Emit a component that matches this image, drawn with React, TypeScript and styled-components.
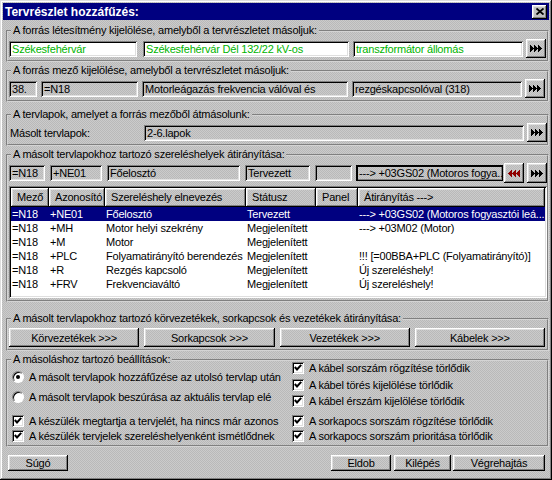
import React from 'react';
import styled, { createGlobalStyle } from 'styled-components';

const GlobalStyle = createGlobalStyle`
    body {
        margin: 0;
        font-family: "Liberation Sans", Arial, sans-serif;
        font-size: 11px;
        letter-spacing: -0.2px;
        color: #000;
    }
`;

const dither = `repeating-conic-gradient(#cbcbcb 0% 25%, #b9b9b9 0% 50%) 0 0 / 2px 2px`;
const raised = `inset -1px -1px #000, inset 1px 1px #fff, inset -2px -2px #808080, inset 2px 2px #dfdfdf`;
const sunken = `inset 1px 1px #808080, inset -1px -1px #fff, inset 2px 2px #000, inset -2px -2px #dfdfdf`;

const Window = styled.div`
    width: 552px;
    height: 480px;
    box-sizing: border-box;
    padding: 3px;
    background: ${dither};
    box-shadow: inset -1px -1px #000, inset 1px 1px #dfdfdf, inset -2px -2px #808080, inset 2px 2px #fff;
    display: flex;
    flex-direction: column;
`;

const TitleBar = styled.div`
    height: 17px;
    background: #000080;
    color: #fff;
    font-size: 12px;
    font-weight: bold;
    letter-spacing: 0;
    display: flex;
    align-items: center;
    justify-content: space-between;
    padding: 0 2px 0 2px;
`;

const CloseButton = styled.div`
    width: 15px;
    height: 14px;
    background: #c0c0c0;
    box-shadow: ${raised};
    display: flex;
    align-items: center;
    justify-content: center;
`;

const Group = styled.fieldset<{ $mt: number }>`
    margin: ${(p) => p.$mt}px 0 0 3px;
    width: 543px;
    box-sizing: border-box;
    padding: 0 1px 2px 1px;
    border: 2px groove #d4d4d4;
    min-width: 0;
`;

const Legend = styled.legend`
    line-height: 13px;
    padding: 0 2px;
    margin-left: 2px;
`;

const Row = styled.div<{ $h?: number; $mt?: number }>`
    display: flex;
    align-items: center;
    height: ${(p) => p.$h ?? 19}px;
    margin-top: ${(p) => p.$mt ?? 2}px;
`;

const Field = styled.div<{ $w: number; $ml?: number; $white?: boolean; $green?: boolean; $focus?: boolean }>`
    width: ${(p) => p.$w}px;
    margin-left: ${(p) => p.$ml ?? 0}px;
    height: 16px;
    flex: none;
    box-sizing: border-box;
    padding: 0 3px;
    line-height: 16px;
    white-space: nowrap;
    overflow: hidden;
    background: ${(p) => (p.$white ? '#fff' : 'transparent')};
    color: ${(p) => (p.$green ? '#00b400' : '#000')};
    box-shadow: ${(p) => (p.$focus ? `inset 0 0 0 1px #000, inset 2px 2px #000, inset -2px -2px #808080` : sunken)};
`;

const FieldLabel = styled.div<{ $w: number }>`
    width: ${(p) => p.$w}px;
    flex: none;
    padding-left: 1px;
`;

const ArrowButton = styled.div<{ $ml?: number; $h?: number }>`
    width: 20px;
    height: ${(p) => p.$h ?? 19}px;
    margin-left: ${(p) => p.$ml ?? 0}px;
    flex: none;
    box-shadow: ${raised};
    display: flex;
    align-items: center;
    justify-content: center;
`;

const ListBox = styled.div`
    margin: 3px 0 0 0;
    width: 538px;
    height: 112px;
    box-sizing: border-box;
    padding: 2px;
    background: #fff;
    box-shadow: ${sunken};
    overflow: hidden;
`;

const ListHeader = styled.div`
    display: flex;
    height: 19px;
    background: ${dither};
`;

const HeaderCell = styled.div<{ $w: number }>`
    width: ${(p) => p.$w}px;
    flex: none;
    box-sizing: border-box;
    padding-left: 6px;
    line-height: 19px;
    white-space: nowrap;
    overflow: hidden;
    box-shadow: ${raised};
`;

const ListRow = styled.div<{ $selected?: boolean }>`
    display: flex;
    height: 14px;
    line-height: 14px;
    background: ${(p) => (p.$selected ? '#000080' : 'transparent')};
    color: ${(p) => (p.$selected ? '#fff' : '#000')};
`;

const Cell = styled.div<{ $w: number }>`
    width: ${(p) => p.$w}px;
    flex: none;
    box-sizing: border-box;
    padding-left: 1px;
    white-space: nowrap;
    overflow: hidden;
`;

const ButtonGrid = styled.div`
    display: grid;
    grid-template-columns: repeat(4, 1fr);
    gap: 5px;
    margin: 3px 1px 0 0;
    height: 19px;
`;

const PushButton = styled.div<{ $w?: number; $ml?: number }>`
    ${(p) => (p.$w ? `width: ${p.$w}px; flex: none;` : '')}
    margin-left: ${(p) => p.$ml ?? 0}px;
    box-shadow: ${raised};
    display: flex;
    align-items: center;
    justify-content: center;
    white-space: nowrap;
`;

const Settings = styled.div`
    display: grid;
    grid-template-columns: 280px 1fr;
    padding: 3px 0 0 3px;
`;

const OptionColumn = styled.div<{ $mt?: number }>`
    display: flex;
    flex-direction: column;
    margin-top: ${(p) => p.$mt ?? 0}px;
    min-width: 0;
`;

const Option = styled.div<{ $mt?: number }>`
    display: flex;
    align-items: center;
    gap: 5px;
    height: 15px;
    margin-top: ${(p) => p.$mt ?? 0}px;
    white-space: nowrap;
    overflow: hidden;
`;

const CheckBox = styled.div`
    width: 12px;
    height: 12px;
    flex: none;
    box-sizing: border-box;
    background: #fff;
    box-shadow: ${sunken};
    display: flex;
    align-items: center;
    justify-content: center;
`;

const Radio = styled.div<{ $on?: boolean }>`
    width: 12px;
    height: 12px;
    flex: none;
    box-sizing: border-box;
    border-radius: 50%;
    background: #fff;
    border: 1px solid;
    border-color: #808080 #fff #fff #808080;
    box-shadow: inset 1px 1px #000;
    display: flex;
    align-items: center;
    justify-content: center;
    &::after {
        content: '';
        display: ${(p) => (p.$on ? 'block' : 'none')};
        width: 4px;
        height: 4px;
        border-radius: 50%;
        background: #000;
    }
`;

const Footer = styled.div`
    display: flex;
    height: 16px;
    margin: 8px 0 0 5px;
`;

const Spacer = styled.div`
    flex: 1;
`;

function Arrows({ left }: { left?: boolean }) {
    const pts = [0, 4, 8].map((x) =>
        left ? `${x + 4},0 ${x},3.5 ${x + 4},7` : `${x},0 ${x + 4},3.5 ${x},7`
    );
    return (
        <svg width="12" height="7" viewBox="0 0 12 7" shapeRendering="crispEdges">
            {pts.map((p) => (
                <polygon key={p} points={p} fill={left ? '#900000' : '#000'} />
            ))}
        </svg>
    );
}

function Check() {
    return (
        <svg width="8" height="7" viewBox="0 0 8 7">
            <polyline points="0.8,3 3,5.4 7.2,0.8" fill="none" stroke="#000" strokeWidth="2" />
        </svg>
    );
}

const columns = [38, 56, 141, 70, 42, 187];
const headers = ['Mező', 'Azonosító', 'Szereléshely elnevezés', 'Státusz', 'Panel', 'Átirányítás --->'];
const rows = [
    ['=N18', '+NE01', 'Főelosztó', 'Tervezett', '', '---> +03GS02 (Motoros fogyasztói leá...'],
    ['=N18', '+MH', 'Motor helyi szekrény', 'Megjelenített', '', '---> +03M02 (Motor)'],
    ['=N18', '+M', 'Motor', 'Megjelenített', '', ''],
    ['=N18', '+PLC', 'Folyamatirányító berendezés', 'Megjelenített', '', '!!! [=00BBA+PLC (Folyamatirányító)]'],
    ['=N18', '+R', 'Rezgés kapcsoló', 'Megjelenített', '', 'Új szereléshely!'],
    ['=N18', '+FRV', 'Frekvenciaváltó', 'Megjelenített', '', 'Új szereléshely!'],
];

export default function App() {
    return (
        <Window>
            <GlobalStyle />
            <TitleBar>
                <span>Tervrészlet hozzáfűzés:</span>
                <CloseButton>
                    <svg width="8" height="7" viewBox="0 0 8 7">
                        <path d="M0.5 0.5 L7.5 6.5 M7.5 0.5 L0.5 6.5" stroke="#000" strokeWidth="1.8" />
                    </svg>
                </CloseButton>
            </TitleBar>

            <Group $mt={4}>
                <Legend>A forrás létesítmény kijelölése, amelyből a tervrészletet másoljuk:</Legend>
                <Row>
                    <Field $w={128} $white $green>Székesfehérvár</Field>
                    <Field $w={206} $ml={6} $white $green>Székesfehérvár Dél 132/22 kV-os</Field>
                    <Field $w={170} $ml={4} $white $green>transzformátor állomás</Field>
                    <ArrowButton $ml={3}><Arrows /></ArrowButton>
                </Row>
            </Group>

            <Group $mt={2}>
                <Legend>A forrás mező kijelölése, amelyből a tervrészletet másoljuk:</Legend>
                <Row>
                    <Field $w={28}>38.</Field>
                    <Field $w={97} $ml={4}>=N18</Field>
                    <Field $w={206} $ml={4}>Motorleágazás frekvencia válóval és</Field>
                    <Field $w={170} $ml={4}>rezgéskapcsolóval (318)</Field>
                    <ArrowButton $ml={3}><Arrows /></ArrowButton>
                </Row>
            </Group>

            <Group $mt={6}>
                <Legend>A tervlapok, amelyet a forrás mezőből átmásolunk:</Legend>
                <Row>
                    <FieldLabel $w={134}>Másolt tervlapok:</FieldLabel>
                    <Field $w={380}>2-6.lapok</Field>
                    <ArrowButton $ml={3}><Arrows /></ArrowButton>
                </Row>
            </Group>

            <Group $mt={2}>
                <Legend>A másolt tervlapokhoz tartozó szereléshelyek átirányítása:</Legend>
                <Row $h={20}>
                    <Field $w={36}>=N18</Field>
                    <Field $w={52} $ml={5}>+NE01</Field>
                    <Field $w={133} $ml={5}>Főelosztó</Field>
                    <Field $w={65} $ml={5}>Tervezett</Field>
                    <Field $w={37} $ml={5}></Field>
                    <Field $w={147} $ml={4} $focus>---&gt; +03GS02 (Motoros fogya..</Field>
                    <ArrowButton $ml={1} $h={20}><Arrows left /></ArrowButton>
                    <ArrowButton $ml={3} $h={20}><Arrows /></ArrowButton>
                </Row>
                <ListBox>
                    <ListHeader>
                        {headers.map((h, i) => (
                            <HeaderCell key={h} $w={columns[i]}>{h}</HeaderCell>
                        ))}
                    </ListHeader>
                    {rows.map((r, ri) => (
                        <ListRow key={r[1]} $selected={ri === 0}>
                            {r.map((c, ci) => (
                                <Cell key={ci} $w={columns[ci]}>{c}</Cell>
                            ))}
                        </ListRow>
                    ))}
                </ListBox>
            </Group>

            <Group $mt={10}>
                <Legend>A másolt tervlapokhoz tartozó körvezetékek, sorkapcsok és vezetékek átirányítása:</Legend>
                <ButtonGrid>
                    <PushButton>Körvezetékek &gt;&gt;&gt;</PushButton>
                    <PushButton>Sorkapcsok &gt;&gt;&gt;</PushButton>
                    <PushButton>Vezetékek &gt;&gt;&gt;</PushButton>
                    <PushButton>Kábelek &gt;&gt;&gt;</PushButton>
                </ButtonGrid>
            </Group>

            <Group $mt={2}>
                <Legend>A másoláshoz tartozó beállítások:</Legend>
                <Settings>
                    <OptionColumn>
                        <Option><Radio $on />A másolt tervlapok hozzáfűzése az utolsó tervlap után</Option>
                        <Option $mt={5}><Radio />A másolt tervlapok beszúrása az aktuális tervlap elé</Option>
                        <Option $mt={9}><CheckBox><Check /></CheckBox>A készülék megtartja a tervjelét, ha nincs már azonos</Option>
                        <Option><CheckBox><Check /></CheckBox>A készülék tervjelek szereléshelyenként ismétlődnek</Option>
                    </OptionColumn>
                    <OptionColumn $mt={-9}>
                        <Option><CheckBox><Check /></CheckBox>A kábel sorszám rögzítése törlődik</Option>
                        <Option $mt={2}><CheckBox><Check /></CheckBox>A kábel törés kijelölése törlődik</Option>
                        <Option $mt={1}><CheckBox><Check /></CheckBox>A kábel érszám kijelölése törlődik</Option>
                        <Option $mt={5}><CheckBox><Check /></CheckBox>A sorkapocs sorszám rögzítése törlődik</Option>
                        <Option><CheckBox><Check /></CheckBox>A sorkapocs sorszám prioritása törlődik</Option>
                    </OptionColumn>
                </Settings>
            </Group>

            <Footer>
                <PushButton $w={60}>Súgó</PushButton>
                <Spacer />
                <PushButton $w={60}>Eldob</PushButton>
                <PushButton $w={57} $ml={3}>Kilépés</PushButton>
                <PushButton $w={92} $ml={2}>Végrehajtás</PushButton>
                <div style={{ width: 4 }} />
            </Footer>
        </Window>
    );
}
